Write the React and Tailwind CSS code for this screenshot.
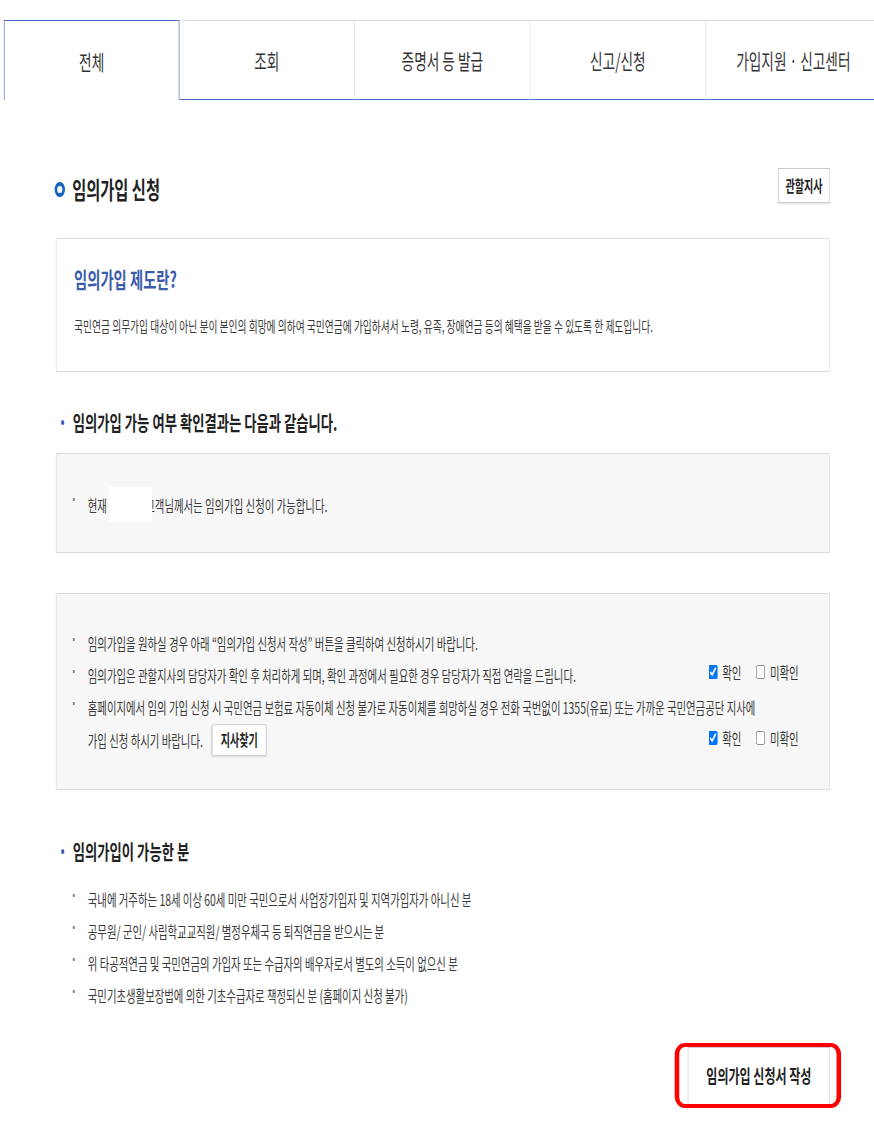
import React from 'react';

const tabs = ['전체', '조회', '증명서 등 발급', '신고/신청', '가입지원 · 신고센터'];

const Bullet = () => <span className="mt-[11px] mr-[20px] h-[3px] w-[3px] shrink-0 bg-[#888]" />;

const Heading = ({ children }) => (
  <h3 className="flex items-center text-[20.5px] leading-[26px] font-bold text-[#222]">
    <span className="mr-[13px] ml-[8px] h-[5px] w-[5px] rounded-full bg-[#3b5bb0]" />
    {children}
  </h3>
);

const Checks = () => (
  <div className="flex w-[146px] shrink-0 items-center text-[16px] text-[#333]">
    <label className="flex items-center">
      <input type="checkbox" defaultChecked className="h-[16px] w-[14px]" />
      <span className="ml-[7px]">확인</span>
    </label>
    <label className="ml-[23px] flex items-center">
      <input type="checkbox" className="h-[16px] w-[14px]" />
      <span className="ml-[7px]">미확인</span>
    </label>
  </div>
);

const App = () => {
  return (
    <div className="min-h-[1125px] w-[874px] overflow-hidden bg-white">
      <div className="w-[1345px] origin-top-left scale-x-[0.65] pt-[20px] font-['Noto_Sans_CJK_KR','Noto_Sans',sans-serif] text-[#3a3a3a]">
        {/* tabs */}
        <ul className="ml-[6px] flex">
          {tabs.map((t, i) => (
            <li
              key={t}
              className={`flex h-[80px] w-[270px] shrink-0 items-center justify-center pt-[2px] text-[21px] text-[#333] ${
                i === 0
                  ? 'border-x border-t border-[#4a6fc8] bg-white'
                  : 'border-t border-r border-b border-t-[#ddd] border-r-[#ddd] border-b-[#4a6fc8]'
              }`}
            >
              {t}
            </li>
          ))}
        </ul>

        <div className="ml-[86px] w-[1191px]">
          <div className="mt-[68px] flex items-end justify-between">
            <h2 className="flex items-center text-[23.5px] leading-[28px] font-bold text-[#222]">
              <span className="mr-[11px] -ml-[2px] h-[15px] w-[16px] rounded-full border-[4px] border-[#1565c0]" />
              임의가입 신청
            </h2>
            <button className="h-[35px] w-[80px] border border-[#ccc] bg-white text-[15.5px] font-bold text-[#222] shadow-[0_1px_2px_rgba(0,0,0,0.15)]">
              관할지사
            </button>
          </div>

          <div className="mt-[35px] h-[134px] border border-[#ddd] bg-white px-[27px] pt-[25px]">
            <p className="text-[22px] leading-[28px] font-bold text-[#3b5bab]">임의가입 제도란?</p>
            <p className="mt-[24px] text-[15px] leading-[20px]">
              국민연금 의무가입 대상이 아닌 분이 본인의 희망에 의하여 국민연금에 가입하셔서 노령, 유족, 장애연금 등의 혜택을 받을 수 있도록 한 제도입니다.
            </p>
          </div>

          <div className="mt-[37px]">
            <Heading>임의가입 가능 여부 확인결과는 다음과 같습니다.</Heading>
          </div>

          <div className="mt-[18px] flex h-[100px] items-center border border-[#ddd] bg-[#f7f7f7] pt-[3px] pl-[25px] text-[16px] leading-[32px]">
            <div className="flex">
              <Bullet />
              <span className="flex items-center">
                현재
                <span className="relative z-10 ml-[4px] -mr-[11px] inline-block h-[35px] w-[66px] bg-white" />
                고객님께서는 임의가입 신청이 가능합니다.
              </span>
            </div>
          </div>

          <div className="mt-[40px] h-[197px] border border-[#ddd] bg-[#f7f7f7] pt-[33px] pl-[25px] pr-[40px] text-[16px] leading-[32px]">
            <ul>
              <li className="flex">
                <Bullet />
                <span>임의가입을 원하실 경우 아래 “임의가입 신청서 작성” 버튼을 클릭하여 신청하시기 바랍니다.</span>
              </li>
              <li className="flex">
                <Bullet />
                <div className="flex flex-1 items-center justify-between">
                  <span>임의가입은 관할지사의 담당자가 확인 후 처리하게 되며, 확인 과정에서 필요한 경우 담당자가 직접 연락을 드립니다.</span>
                  <div className="-mt-[6px]">
                    <Checks />
                  </div>
                </div>
              </li>
              <li className="flex">
                <Bullet />
                <div className="flex-1">
                  <p className="whitespace-nowrap">
                    홈페이지에서 임의 가입 신청 시 국민연금 보험료 자동이체 신청 불가로 자동이체를 희망하실 경우 전화 국번없이 1355(유료) 또는 가까운 국민연금공단 지사에
                  </p>
                  <div className="flex h-[34px] items-center justify-between">
                    <span className="flex items-center">
                      가입 신청 하시기 바랍니다.
                      <button className="ml-[14px] h-[32px] w-[84px] rounded-[2px] border border-[#ccc] bg-white text-[15.5px] leading-none font-bold text-[#222] shadow-[0_1px_2px_rgba(0,0,0,0.12)]">
                        지사찾기
                      </button>
                    </span>
                    <div className="-mt-[4px]">
                      <Checks />
                    </div>
                  </div>
                </div>
              </li>
            </ul>
          </div>

          <div className="mt-[48px]">
            <Heading>임의가입이 가능한 분</Heading>
          </div>

          <ul className="mt-[19px] pl-[26px] text-[16px] leading-[32px]">
            <li className="flex">
              <Bullet />
              <span>국내에 거주하는 18세 이상 60세 미만 국민으로서 사업장가입자 및 지역가입자가 아니신 분</span>
            </li>
            <li className="flex">
              <Bullet />
              <span>공무원/ 군인/ 사립학교교직원/ 별정우체국 등 퇴직연금을 받으시는 분</span>
            </li>
            <li className="flex">
              <Bullet />
              <span>위 타공적연금 및 국민연금의 가입자 또는 수급자의 배우자로서 별도의 소득이 없으신 분</span>
            </li>
            <li className="flex">
              <Bullet />
              <span>국민기초생활보장법에 의한 기초수급자로 책정되신 분 (홈페이지 신청 불가)</span>
            </li>
          </ul>

          <div className="mt-[36px] flex justify-end">
            <div className="relative">
              <button className="h-[58px] w-[219px] border border-[#ccc] bg-white text-[18.5px] font-bold text-[#222]">
                임의가입 신청서 작성
              </button>
              <span className="absolute -top-[4px] -right-[17px] -bottom-[3px] -left-[20px] rounded-[16px/11px] border-x-[7px] border-y-[4px] border-[#f00]" />
            </div>
          </div>
        </div>
      </div>
    </div>
  );
};

export default App;
